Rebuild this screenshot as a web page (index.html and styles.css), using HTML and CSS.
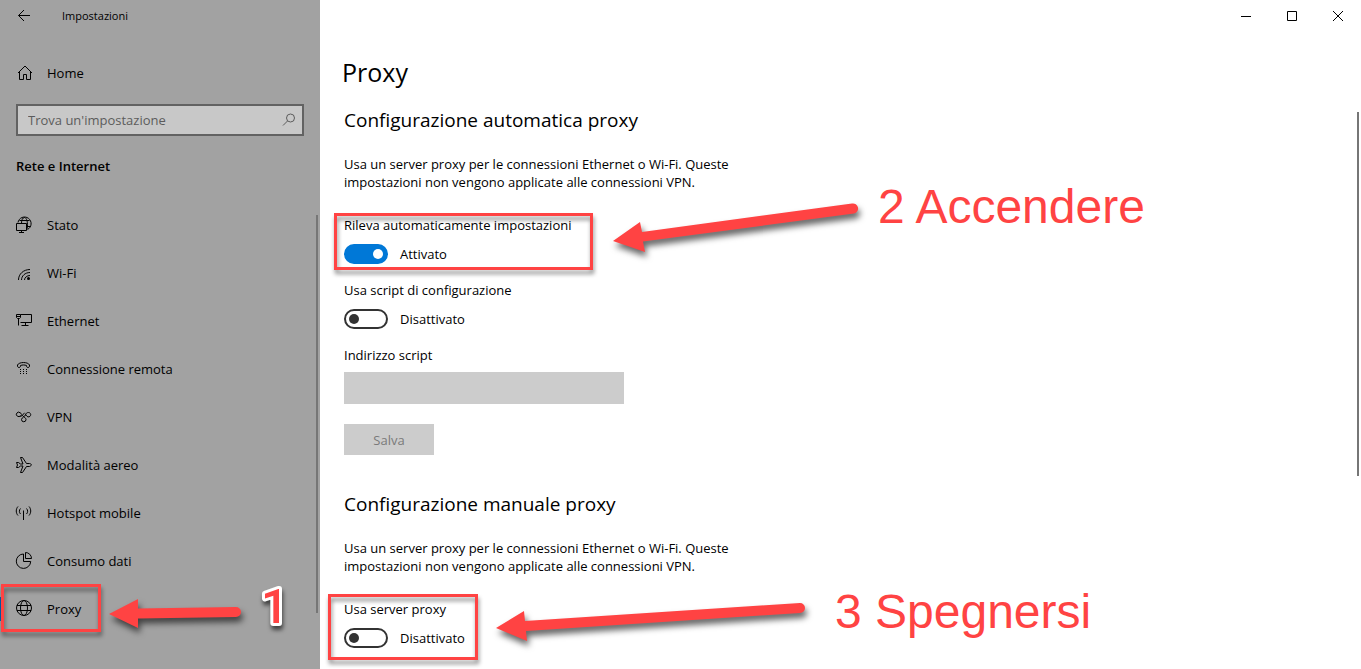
FILE: index.html
```html
<!DOCTYPE html>
<html lang="it">
<head>
<meta charset="utf-8">
<title>Impostazioni</title>
<link rel="stylesheet" href="styles.css">
</head>
<body>
<div class="window">
  <aside class="sidebar">
    <header class="titlebar">
      <button class="back" type="button" aria-label="Indietro">
        <svg class="icon" viewBox="0 0 16 16"><path d="M14 7.500H2.500M8 2L2.500 7.500L8 13"/></svg>
      </button>
      <span class="app-name">Impostazioni</span>
    </header>
    <a class="nav-link home" href="#">
      <svg class="icon" viewBox="0 0 16 16"><path d="M2 8L9 1L16 8M3.500 7V14.500H7.500V9.500H10.500V14.500H14.500V7"/></svg>
      Home
    </a>
    <form class="search">
      <input class="search-input" type="text" placeholder="Trova un'impostazione" aria-label="Trova un'impostazione">
      <button class="search-button" type="button" aria-label="Cerca">
        <svg class="icon" viewBox="0 0 16 16"><circle cx="8.500" cy="6" r="4"/><path d="M5.500 9L1 13.500"/></svg>
      </button>
    </form>
    <h2 class="section-name">Rete e Internet</h2>
    <nav class="nav">
      <a class="nav-link" href="#">
        <svg class="icon" viewBox="0 0 16 16"><path d="M.500 6.500H10.500V13.500H.500ZM5.500 13.500V15.500M3 15.500H8M2 5.500A6.600 6.600 0 1 1 11.500 12.500M5.500 6C5.500 3.500 6.500 .500 8.500 .500C10.500 .500 12.500 6 11 12M3.500 3.500H13.500M11 9.500H14.500"/></svg>
        Stato
      </a>
      <a class="nav-link" href="#">
        <svg class="icon" viewBox="0 0 16 16"><path d="M2.500 15C2.500 9 7.500 4.500 14 4.500M5.500 15C5.500 11 9 7.500 14 7.500M8.500 15C8.500 12.500 11 10.500 14 10.500"/><circle class="solid" cx="12.500" cy="13.500" r="1.500"/></svg>
        Wi-Fi
      </a>
      <a class="nav-link" href="#">
        <svg class="icon" viewBox="0 0 16 16"><path d="M4.500 1.500H15.500V9.500H4.500M9.500 9.500V12.500M5.500 12.500H12.500M.500 1.500H4.500V4.500L3.500 5.500H1.500L.500 4.500ZM2.500 5.500V12.500M.500 3.500H4.500"/></svg>
        Ethernet
      </a>
      <a class="nav-link" href="#">
        <svg class="icon" viewBox="0 0 16 16"><path d="M1.500 5.500V4C3 .700 12 .700 13.500 4V5.500C13 6.800 11 6.800 10.500 5.500V4.500C8.500 3.800 6.500 3.800 4.500 4.500V5.500C4 6.800 2 6.800 1.500 5.500Z"/><path class="dots" d="M4 8.500H12M4 10.500H12M4 12.500H12"/></svg>
        Connessione remota
      </a>
      <a class="nav-link" href="#">
        <svg class="icon" viewBox="0 0 16 16"><path d="M10 10.500A2.200 2.200 0 1 1 5.500 10.500C6 8 9 7.500 9.500 6C10 4 11 3.500 12.500 3.500A2.200 2.200 0 1 1 11 7.300L9.500 5.500M4.500 6.500A2.200 2.200 0 1 1 4 3.700C6 4.500 5.500 6.500 8 8C9.500 9 10 9.500 10 10.500M3.500 7.500C5.500 7.500 7 6 8.500 3.800"/></svg>
        VPN
      </a>
      <a class="nav-link" href="#">
        <svg class="icon" viewBox="0 0 16 16"><path d="M.500 5.500H2.500L4.500 7H7L4.500 .500H6.500L10.500 6.500H13.500C16 7 16 8.500 13.500 9.500H10.500L6.500 15.500H4.500L7 9H4.500L2.500 10.500H.500L1.500 8Z"/></svg>
        Modalità aereo
      </a>
      <a class="nav-link" href="#">
        <svg class="icon" viewBox="0 0 16 16"><path d="M7.500 5.500V15M4.500 3.500C3 5 3 7.500 4.500 9M10.500 3.500C12 5 12 7.500 10.500 9M2 1.500C-.300 4 -.300 8 2 10.500M13 1.500C15.300 4 15.300 8 13 10.500"/></svg>
        Hotspot mobile
      </a>
      <a class="nav-link" href="#">
        <svg class="icon" viewBox="0 0 16 16"><path d="M7.500 1A7.200 7.200 0 1 0 14.700 8.500H7.500ZM9.500 -.500V5.500H15.500A6 6 0 0 0 9.500 -.500Z"/></svg>
        Consumo dati
      </a>
      <a class="nav-link current" href="#" aria-current="page">
        <svg class="icon" viewBox="0 0 16 16"><circle cx="8" cy="7" r="7.500"/><ellipse cx="8" cy="7" rx="3.500" ry="7.500"/><path d="M1 4.500H15M1 9.500H15"/></svg>
        Proxy
        <span class="highlight highlight-nav"></span>
      </a>
    </nav>
    <span class="scroll-thumb sidebar-thumb"></span>
  </aside>

  <main class="main">
    <div class="caption">
      <button class="caption-button" type="button" aria-label="Riduci a icona"><svg class="glyph" viewBox="0 0 10 10"><path d="M0 5.500H10"/></svg></button>
      <button class="caption-button" type="button" aria-label="Ingrandisci"><svg class="glyph" viewBox="0 0 10 10"><path d="M.500 .500H9.500V9.500H.500Z"/></svg></button>
      <button class="caption-button" type="button" aria-label="Chiudi"><svg class="glyph" viewBox="0 0 10 10"><path d="M0 0L10 10M10 0L0 10"/></svg></button>
    </div>
    <h1 class="page-title">Proxy</h1>
    <section class="group">
      <h2 class="group-title">Configurazione automatica proxy</h2>
      <p class="intro">Usa un server proxy per le connessioni Ethernet o Wi-Fi. Queste impostazioni non vengono applicate alle connessioni VPN.</p>
      <div class="setting">
        <label class="setting-name" for="detect">Rileva automaticamente impostazioni</label>
        <div class="switch-row"><input class="switch" type="checkbox" id="detect" checked><span>Attivato</span></div>
        <span class="highlight highlight-detect"></span>
      </div>
      <div class="setting">
        <label class="setting-name" for="script">Usa script di configurazione</label>
        <div class="switch-row"><input class="switch" type="checkbox" id="script"><span>Disattivato</span></div>
      </div>
      <div class="setting address">
        <label class="setting-name" for="address">Indirizzo script</label>
        <input class="text-field" type="text" id="address" disabled>
      </div>
      <button class="save" type="button" disabled>Salva</button>
    </section>
    <section class="group">
      <h2 class="group-title">Configurazione manuale proxy</h2>
      <p class="intro">Usa un server proxy per le connessioni Ethernet o Wi-Fi. Queste impostazioni non vengono applicate alle connessioni VPN.</p>
      <div class="setting">
        <label class="setting-name" for="manual">Usa server proxy</label>
        <div class="switch-row"><input class="switch" type="checkbox" id="manual"><span>Disattivato</span></div>
        <span class="highlight highlight-manual"></span>
      </div>
    </section>
    <span class="scroll-thumb main-thumb"></span>
  </main>

  <svg class="callouts">
    <g class="arrow">
      <path d="M109 614L138 599V608.500L236 607A5 5 0 0 1 236 617L138 618.500V628Z"/>
      <path d="M613 241L640 222L642 232L852 203.500A5 5 0 0 1 854 213.500L643 241.500L645 252Z"/>
      <path d="M496 628L524 611L525 621L800 603A5 5 0 0 1 800 613L526 631L527 641Z"/>
    </g>
    <text class="step-number" x="261" y="623">1</text>
    <text class="step-text" x="878" y="223">2 Accendere</text>
    <text class="step-text" x="835" y="628">3 Spegnersi</text>
  </svg>
</div>
</body>
</html>
```
FILE: styles.css
```css
* { box-sizing: border-box; }

body {
  margin: 0;
  background: #fff;
  color: #000;
  font: 13px/18px "Open Sans", "Noto Sans", sans-serif;
}

button, input { font: inherit; color: inherit; margin: 0; }
h1, h2, p { margin: 0; font-weight: 400; }

.window {
  position: relative;
  display: grid;
  grid-template-columns: 320px 1fr;
  min-height: 100vh;
  overflow: hidden;
}

.icon {
  width: 16px;
  height: 16px;
  flex: none;
  fill: none;
  stroke: currentColor;
  overflow: visible;
}
.icon .solid { fill: currentColor; stroke: none; }
.icon .dots { stroke-dasharray: 1 2; }

/* Sidebar */
.sidebar { position: relative; background: #a2a2a2; }

.titlebar { display: flex; align-items: center; height: 32px; }
.back {
  display: flex;
  align-items: center;
  justify-content: center;
  width: 48px;
  height: 32px;
  padding: 0;
  border: 0;
  background: none;
}
.app-name { padding-left: 14px; font-size: 11px; }

.nav-link {
  position: relative;
  display: flex;
  align-items: center;
  gap: 15px;
  height: 48px;
  padding-left: 16px;
  color: inherit;
  text-decoration: none;
}
.home { margin-top: 17px; }

.search {
  display: flex;
  height: 32px;
  margin: 7px 16px 0;
  border: 2px solid #626262;
  background: #c8c8c8;
  color: #5c5c5c;
}
.search-input {
  flex: 1;
  min-width: 0;
  padding: 0 10px;
  border: 0;
  outline: 0;
  background: none;
}
.search-input::placeholder { color: #5c5c5c; opacity: 1; }
.search-button { display: flex; align-items: center; padding: 0 4px; border: 0; background: none; }

.section-name { margin: 21px 16px 26px; font-size: 13px; font-weight: 600; }

.current::before {
  content: "";
  position: absolute;
  left: 0;
  top: 12px;
  bottom: 12px;
  width: 3px;
  background: #0063b1;
}

.scroll-thumb { position: absolute; width: 2px; background: #767676; }
.sidebar-thumb { top: 215px; right: 2px; height: 398px; }
.main-thumb { top: 112px; right: 2px; height: 364px; }

/* Content */
.main { position: relative; }

.caption { display: flex; justify-content: flex-end; }
.caption-button {
  display: flex;
  align-items: center;
  justify-content: center;
  width: 46px;
  height: 32px;
  padding: 0;
  border: 0;
  background: none;
}
.glyph { width: 10px; height: 10px; fill: none; stroke: #000; }

.page-title { padding: 20px 22px 0; font-size: 25px; line-height: 40px; }

.group { padding: 14px 24px 21px; }
.group-title { font-size: 19px; line-height: 28px; }
.intro { max-width: 400px; margin: 21px 0 25px; }

.setting { position: relative; margin-bottom: 17px; }
.setting-name { display: block; margin-bottom: 10px; }
.switch-row { display: flex; align-items: center; gap: 12px; height: 20px; }

.switch {
  display: flex;
  align-items: center;
  appearance: none;
  width: 44px;
  height: 20px;
  padding: 0 3px;
  border: 2px solid #333;
  border-radius: 10px;
}
.switch::before {
  content: "";
  width: 10px;
  height: 10px;
  border-radius: 50%;
  background: #333;
}
.switch:checked { justify-content: flex-end; border-color: #0078d7; background: #0078d7; }
.switch:checked::before { background: #fff; }

.address { margin-bottom: 20px; }
.address .setting-name { margin-bottom: 8px; }
.text-field { display: block; width: 280px; height: 32px; border: 0; background: #ccc; }
.save { display: block; width: 90px; height: 31px; padding: 0; border: 0; background: #ccc; color: #7a7a7a; }

/* Step callouts */
.highlight {
  position: absolute;
  border: 3px solid #ff4343;
  filter: drop-shadow(1px 4px 2px rgb(0 0 0 / 45%));
  pointer-events: none;
}
.highlight-nav { top: -1px; left: 1px; width: 100px; height: 48px; }
.highlight-detect { top: -3px; bottom: -6px; left: -10px; width: 259px; }
.highlight-manual { top: -6px; bottom: -12px; left: -16px; width: 150px; }

.callouts { position: absolute; inset: 0; width: 100%; height: 100%; pointer-events: none; }
.arrow { fill: #ff4343; filter: drop-shadow(2px 5px 3px rgb(0 0 0 / 60%)); }
.step-text { fill: #ff4343; font: 48px "Liberation Sans", Arial, sans-serif; }
.step-number {
  fill: #ff4343;
  stroke: #fff;
  stroke-width: 6px;
  stroke-linejoin: round;
  paint-order: stroke;
  font: 500 48px Roboto, sans-serif;
  filter: drop-shadow(1px 4px 2px rgb(0 0 0 / 60%));
}
```
